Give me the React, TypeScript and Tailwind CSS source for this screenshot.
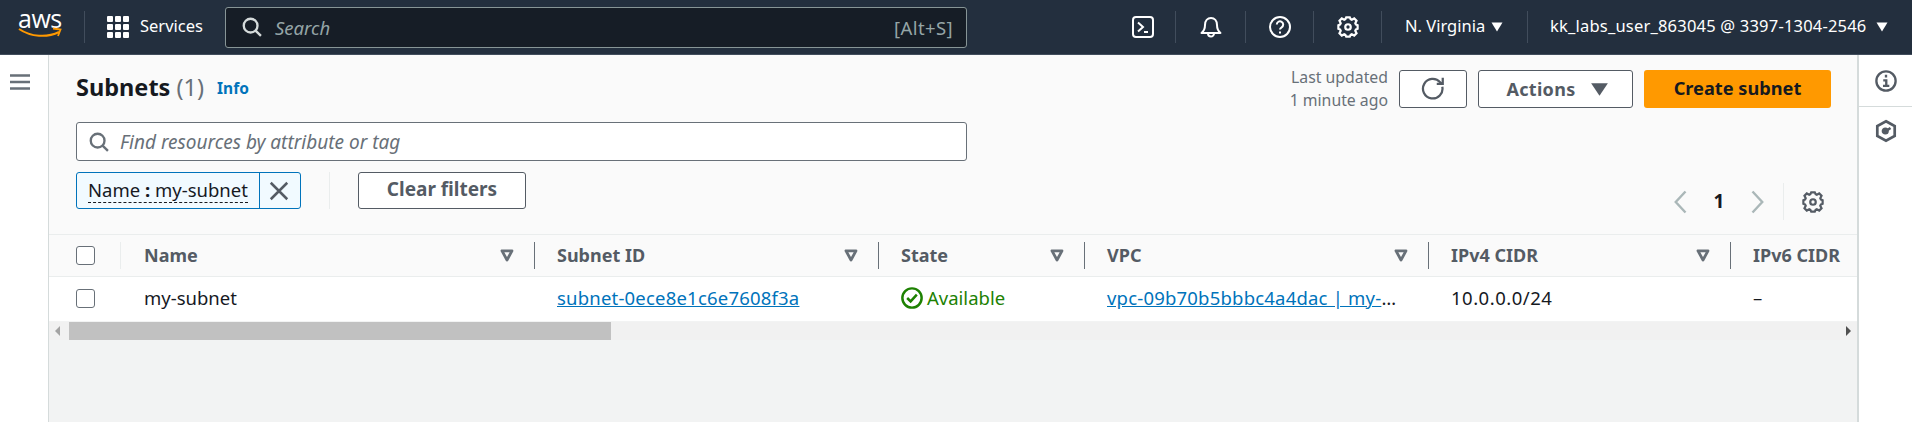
import React from "react";

const Svg = ({ size = 16, className = "", children, sw = 2 }: { size?: number; className?: string; children: React.ReactNode; sw?: number }) => (
  <svg width={size} height={size} viewBox="0 0 16 16" fill="none" stroke="currentColor" strokeWidth={sw} className={className}>
    {children}
  </svg>
);

const Gear = ({ size = 22, className = "" }: { size?: number; className?: string }) => (
  <Svg size={size} className={className} sw={1.6}>
    <path d="M13.3 5.2l.9-1.700-1.700-1.700-1.700.9c-.3-.2-.6-.3-.9-.4L9.300 1H6.700l-.6 1.300c-.3.1-.6.2-.9.4l-1.700-.9-1.700 1.700.9 1.700c-.2.3-.3.6-.4.9L1 6.700v2.600l1.300.6c.1.3.2.6.4.9l-.9 1.700 1.700 1.700 1.700-.9c.3.2.6.3.9.4l.6 1.300h2.600l.6-1.300c.3-.1.6-.2.9-.4l1.700.9 1.700-1.700-.9-1.700c.2-.3.3-.6.4-.9l1.300-.6V6.700l-1.300-.6c-.1-.3-.2-.6-.4-.9z" />
    <circle cx="8" cy="8" r="2" />
  </Svg>
);

const Search = ({ className = "" }: { className?: string }) => (
  <Svg size={22} className={className} sw={1.7}>
    <circle cx="7" cy="7" r="5" />
    <path d="M14.500 14.500 10.600 10.600" />
  </Svg>
);

const Caret = ({ className = "" }: { className?: string }) => (
  <svg width="12" height="10" viewBox="0 0 12 10" className={className}>
    <path d="M0.500 0.500h11L6 9.500z" fill="currentColor" />
  </svg>
);

const FilterIcon = () => (
  <svg width="14" height="13" viewBox="0 0 14 13" className="text-[#687078] shrink-0">
    <path d="M2 1.800h10L7 11z" fill="none" stroke="currentColor" strokeWidth="2.800" strokeLinejoin="round" />
  </svg>
);

const Checkbox = () => <div className="w-[19px] h-[19px] rounded-[3px] border border-[#687078] bg-white shrink-0" />;

const NavSep = ({ className = "" }: { className?: string }) => <div className={`w-px h-[32px] bg-[#414d5c] shrink-0 ${className}`} />;

const HeaderCell = ({ label, end = true }: { label: string; end?: boolean }) => (
  <div className="flex items-center pl-[22px] min-w-0">
    <span className="flex-1 font-bold text-[18px] text-[#545b64] whitespace-nowrap">{label}</span>
    {end && <FilterIcon />}
    {end && <div className="w-px h-[27px] bg-[#687078] ml-[20px]" />}
  </div>
);

export default function App() {
  return (
    <div className="flex flex-col h-[422px] w-[1912px] overflow-hidden bg-white text-[18.5px] text-[#16191f]" style={{ fontFamily: '"Noto Sans", sans-serif' }}>
      {/* Top navigation */}
      <header className="flex items-center h-[55px] bg-[#232f3e] text-white shrink-0 border-b border-[#414d5c] text-[16.5px]">
        <div className="w-[84px] shrink-0 flex flex-col items-start pl-[18px] relative">
          <span className="text-[25px] leading-[20px] tracking-[-0.5px] mt-[-8px]" style={{ fontFamily: '"Open Sans", sans-serif' }}>aws</span>
          <svg width="44" height="12" viewBox="0 0 44 12" className="-mt-[1px]">
            <path d="M1 2c12 8 28 9 40 3" fill="none" stroke="#ff9900" strokeWidth="2" />
            <path d="M35 1.500l7.500 1-2.500 6.500" fill="none" stroke="#ff9900" strokeWidth="1.800" />
          </svg>
        </div>
        <NavSep />
        <div className="grid grid-cols-3 gap-[2px] w-[22px] ml-[22px] shrink-0">
          {Array.from({ length: 9 }).map((_, i) => (
            <div key={i} className="w-[6px] h-[6px] rounded-[1px] bg-white" />
          ))}
        </div>
        <span className="ml-[11px] w-[85px] shrink-0 -mt-[2px]">Services</span>
        <div className="flex items-center w-[742px] h-[41px] bg-[#161d26] border border-[#879596] rounded-[3px] pl-[15px] pr-[13px] shrink-0">
          <Search className="text-[#d5dbdb]" />
          <span className="ml-[12px] flex-1 italic text-[#95a5a6] text-[18.5px] pt-px">Search</span>
          <span className="text-[#95a5a6] text-[18.5px] tracking-[0.4px] pt-px">[Alt+S]</span>
        </div>
        <svg width="22" height="22" viewBox="0 0 22 22" className="ml-[165px] shrink-0" fill="none" stroke="currentColor" strokeWidth="2">
          <rect x="1" y="1" width="20" height="20" rx="3" />
          <path d="M6 6.500l5 4.500-5 4.500M12 16h4" />
        </svg>
        <NavSep className="ml-[21px]" />
        <svg width="22" height="24" viewBox="0 0 22 24" className="ml-[24px] shrink-0" fill="none" stroke="currentColor" strokeWidth="2" strokeLinejoin="round">
          <path d="M1.500 18c2.500-2 3.500-4 3.500-8 0-4 2.500-7 6-7s6 3 6 7c0 4 1 6 3.500 8z" />
          <path d="M8 18.500a3 3 0 0 0 6 0" />
        </svg>
        <NavSep className="ml-[23px]" />
        <svg width="22" height="22" viewBox="0 0 22 22" className="ml-[23px] shrink-0" fill="none" stroke="currentColor" strokeWidth="2">
          <circle cx="11" cy="11" r="10" />
          <path d="M7.800 8.500a3.200 3.200 0 1 1 4.800 2.800c-1 .6-1.600 1-1.600 2.200" />
          <path d="M11 15.500v2" />
        </svg>
        <NavSep className="ml-[22px]" />
        <Gear className="ml-[23px] shrink-0" />
        <NavSep className="ml-[22px]" />
        <span className="ml-[23px] w-[77px] whitespace-nowrap -mt-[2px]">N. Virginia</span>
        <Caret className="ml-[9px] shrink-0" />
        <NavSep className="ml-[24px]" />
        <span className="ml-[22px] w-[318px] whitespace-nowrap tracking-[0.2px] -mt-[2px]">kk_labs_user_863045 @ 3397-1304-2546</span>
        <Caret className="ml-[8px] shrink-0" />
      </header>

      <div className="flex flex-1 min-h-0">
        {/* Left rail */}
        <aside className="w-[49px] shrink-0 bg-white border-r border-[#d5dbdb] flex justify-center pt-[19px] pr-[8px]">
          <svg width="20" height="16" viewBox="0 0 20 16" className="text-[#687078]" fill="none" stroke="currentColor" strokeWidth="2.400">
            <path d="M0 1.500h20M0 8h20M0 14.500h20" />
          </svg>
        </aside>

        {/* Main */}
        <main className="flex-1 min-w-0 flex flex-col bg-[#f2f3f3]">
          <div className="bg-[#fafafa] pl-[27px] pr-[26px] pt-[15px] pb-[14px]">
            <div className="flex items-center h-[38px]">
              <h1 className="text-[23.5px] font-bold whitespace-nowrap -mt-[2px]">
                Subnets <span className="font-normal text-[#687078]">(1)</span>
              </h1>
              <span className="ml-[13px] text-[15.5px] font-bold text-[#0073bb]">Info</span>
              <div className="flex-1" />
              <div className="text-right text-[15.8px] leading-[23px] text-[#687078] whitespace-nowrap">
                <div>Last updated</div>
                <div>1 minute ago</div>
              </div>
              <button className="ml-[11px] w-[68px] h-[38px] flex items-center justify-center bg-white border border-[#545b64] rounded-[3px] text-[#545b64]">
                <Svg size={24} sw={1.500}>
                  <path d="M10.500 4.500h4v-4" />
                  <path d="M14.200 6.500A6.500 6.500 0 1 1 12.800 3.600l1.400 1" />
                </Svg>
              </button>
              <button className="ml-[11px] w-[155px] h-[38px] flex items-center justify-center pl-[4px] bg-white border border-[#545b64] rounded-[3px] font-bold text-[18px] tracking-[0.3px] text-[#545b64]">
                Actions
                <svg width="19" height="15" viewBox="0 0 17 13" className="ml-[14px]">
                  <path d="M1 1h15L8.500 12z" fill="currentColor" />
                </svg>
              </button>
              <button className="ml-[11px] w-[187px] h-[38px] bg-[#ff9900] rounded-[3px] font-bold text-[18.2px] text-[#16191f]">Create subnet</button>
            </div>

            <div className="mt-[14px] flex items-center w-[891px] h-[39px] bg-white border border-[#687078] rounded-[3px] pl-[11px]">
              <Search className="text-[#687078]" />
              <span className="ml-[10px] pt-px italic text-[#687078] text-[19px]">Find resources by attribute or tag</span>
            </div>

            <div className="mt-[11px] flex items-start h-[48px]">
              <div className="flex items-center w-[225px] h-[37px] bg-[#f1faff] border border-[#0073bb] rounded-[3px]">
                <span className="ml-[11px] w-[160px] whitespace-nowrap border-b border-dashed border-[#16191f] leading-[24px] text-[18.5px]">
                  Name <b>:</b> my-subnet
                </span>
                <div className="ml-[11px] w-px h-full bg-[#0073bb]" />
                <Svg size={22} className="ml-[8px] text-[#545b64]" sw={1.800}>
                  <path d="M2 2l12 12M14 2 2 14" />
                </Svg>
              </div>
              <div className="ml-[28px] w-px h-[37px] bg-[#eaeded]" />
              <button className="ml-[28px] w-[168px] h-[37px] pb-[2px] bg-white border border-[#545b64] rounded-[3px] font-bold text-[19px] text-[#545b64]">Clear filters</button>
              <div className="flex-1" />
              <div className="self-end flex items-center h-[37px] text-[#aab7b8]">
                <Svg size={24} sw={1.600}>
                  <path d="M11 1 4.500 8l6.500 7" />
                </Svg>
                <span className="w-[52px] text-center font-bold text-[19px] text-[#16191f]">1</span>
                <Svg size={24} sw={1.600}>
                  <path d="M5 1l6.500 7L5 15" />
                </Svg>
                <div className="ml-[14px] w-px h-full bg-[#eaeded]" />
                <Gear className="ml-[18px] mr-[7px] text-[#545b64]" />
              </div>
            </div>
          </div>

          {/* Table */}
          <div className="grid grid-cols-[73px_413px_344px_206px_344px_302px_1fr] h-[43px] bg-[#fafafa] border-y border-[#eaeded] shrink-0">
            <div className="flex items-center pl-[27px]">
              <Checkbox />
              <div className="flex-1" />
              <div className="w-px h-[27px] bg-[#eaeded] mr-[1px]" />
            </div>
            <HeaderCell label="Name" />
            <HeaderCell label="Subnet ID" />
            <HeaderCell label="State" />
            <HeaderCell label="VPC" />
            <HeaderCell label="IPv4 CIDR" />
            <HeaderCell label="IPv6 CIDR" end={false} />
          </div>
          <div className="grid grid-cols-[73px_413px_344px_206px_344px_302px_1fr] h-[44px] pb-[2px] bg-white items-center shrink-0">
            <div className="pl-[27px]">
              <Checkbox />
            </div>
            <div className="pl-[22px]">my-subnet</div>
            <div className="pl-[22px]">
              <span className="text-[#0073bb] underline tracking-[0.2px]">subnet-0ece8e1c6e7608f3a</span>
            </div>
            <div className="pl-[22px] flex items-center text-[#1d8102]">
              <Svg size={22} sw={1.800}>
                <circle cx="8" cy="8" r="7" />
                <path d="M4.500 8l2.500 2.500 4.500-5" />
              </Svg>
              <span className="ml-[4px]">Available</span>
            </div>
            <div className="pl-[22px] pr-[30px] truncate">
              <span className="text-[#0073bb] underline tracking-[0.2px]">vpc-09b70b5bbbc4a4dac | my-vpc</span>
            </div>
            <div className="pl-[22px] tracking-[0.5px]">10.0.0.0/24</div>
            <div className="pl-[22px]">–</div>
          </div>

          {/* Horizontal scrollbar */}
          <div className="flex items-center h-[18px] bg-[#f1f1f1] shrink-0 mt-[1px]">
            <svg width="6" height="10" viewBox="0 0 6 10" className="ml-[6px] text-[#a3a3a3]">
              <path d="M5 0v10L0 5z" fill="currentColor" />
            </svg>
            <div className="ml-[8px] w-[542px] h-full bg-[#c1c1c1]" />
            <div className="flex-1" />
            <svg width="6" height="10" viewBox="0 0 6 10" className="mr-[6px] text-[#505050]">
              <path d="M1 0v10l5-5z" fill="currentColor" />
            </svg>
          </div>
        </main>

        {/* Right rail */}
        <aside className="w-[55px] shrink-0 bg-white border-l-2 border-[#d5dbdb]">
          <div className="h-[52px] flex items-center justify-center border-b border-[#d5dbdb] text-[#545b64]">
            <Svg size={22} sw={1.700}>
              <circle cx="8" cy="8" r="7" />
              <path d="M8 3.500v2M6 7.500h2.200v4M5.800 11.500h4.600" />
            </Svg>
          </div>
          <div className="flex justify-center pt-[12px] text-[#545b64]">
            <Svg size={24} sw={1.800}>
              <path d="M8 1.500l5.800 3.200v6.600L8 14.500l-5.800-3.200V4.700z" />
              <circle cx="7.500" cy="8" r="1.500" fill="currentColor" />
              <path d="M8 8l3-2" />
            </Svg>
          </div>
        </aside>
      </div>
    </div>
  );
}
